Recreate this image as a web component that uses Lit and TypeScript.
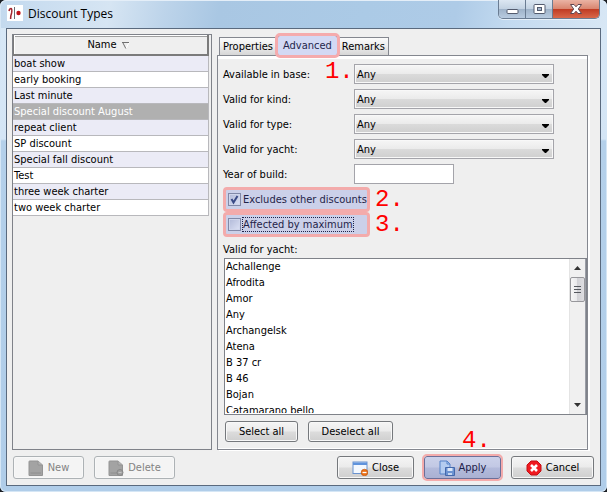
import { LitElement, html, css, svg } from "lit";
import { customElement, state } from "lit/decorators.js";
import { classMap } from "lit/directives/class-map.js";

const TYPES = [
  "boat show",
  "early booking",
  "Last minute",
  "Special discount August",
  "repeat client",
  "SP discount",
  "Special fall discount",
  "Test",
  "three week charter",
  "two week charter",
];

const FILTERS = [
  { id: "base", label: "Available in base:" },
  { id: "kind", label: "Valid for kind:" },
  { id: "type", label: "Valid for type:" },
  { id: "yacht", label: "Valid for yacht:" },
];

const YACHTS = [
  "Achallenge",
  "Afrodita",
  "Amor",
  "Any",
  "Archangelsk",
  "Atena",
  "B 37 cr",
  "B 46",
  "Bojan",
  "Catamarano bello",
];

const page = svg`
  <path d="M1 1.5Q1 1 1.500 1H10L14.500 5V15.500H1Z" fill="#a3a3a3" stroke="#949494"/>
  <path d="M10 1V5H14.500" fill="#b4b4b4" stroke="#949494"/>
  <path d="M2.500 13H13" stroke="#8e8e8e"/>`;

@customElement("app-root")
export class AppRoot extends LitElement {
  @state() private selected = 3;

  static styles = css`
    :host {
      display: block;
      background: #1c1f24;
      font: 11px/16px "DejaVu Sans Condensed", "DejaVu Sans", sans-serif;
      color: #000;
    }
    * {
      box-sizing: border-box;
    }
    button,
    input,
    select {
      font: inherit;
      color: inherit;
      margin: 0;
    }
    svg {
      display: block;
      flex: none;
    }
    .window {
      display: flex;
      flex-direction: column;
      min-height: 100vh;
      padding: 0 6px 6px;
      border-radius: 6px;
      background: linear-gradient(180deg, #d8e8f6 0, #d4e5f5 139px, #b4d0ea 141px, #b0cde9 100%);
      box-shadow: inset 0 0 0 1px #d5e6f5;
    }
    .titlebar {
      display: flex;
      align-items: flex-start;
      height: 28px;
      margin: 0 -5px;
      padding: 0 6px;
      border-top: 1px solid #e4eef8;
      border-radius: 6px 6px 0 0;
      background: linear-gradient(100deg, #c3d9ee 0, #d6e5f3 18%, #bdd4ea 27%, #a9c7e3 36%, #abcae6 60%, #aecbe7 75%, #c3daf0 84%, #d8e7f5 100%);
    }
    .logo {
      margin-top: 4px;
    }
    .title {
      flex: 1;
      margin: 4px 0 0 5px;
      font: 12px/18px "Open Sans", "Noto Sans", sans-serif;
    }
    .caption {
      display: flex;
      height: 19px;
      margin-top: -1px;
      border: 1px solid #6a7c92;
      border-top: 0;
      border-radius: 0 0 5px 5px;
      overflow: hidden;
      box-shadow: 0 1px 0 #e8f1fa;
    }
    .caption button {
      display: grid;
      place-items: center;
      width: 27px;
      padding: 0;
      border: 0;
      border-right: 1px solid #6a7c92;
      background: linear-gradient(#dce7f2 0, #c3d2e2 48%, #9eb2c8 50%, #b8cbe0 100%);
    }
    .caption .shut {
      width: 46px;
      border-right: 0;
      background: linear-gradient(#eab3a4 0, #d98670 48%, #bf3a22 50%, #d9684a 100%);
    }
    .content {
      flex: 1;
      display: flex;
      flex-direction: column;
      border: 1px solid #5a6a7e;
      background: #efefef;
    }
    .main {
      flex: 1;
      display: grid;
      grid-template-columns: 200px minmax(0, 1fr);
      gap: 5px;
      padding: 5px 12px 0 5px;
    }
    .pane {
      padding-right: 2px;
      border: 1px solid #7f8289;
    }
    .types {
      width: 100%;
      border-collapse: separate;
      border-spacing: 0;
      table-layout: fixed;
    }
    .types th {
      height: 21px;
      padding: 0;
      border: 1px solid #7b7b7b;
      border-width: 0 2px 2px 1px;
      box-shadow: inset 1px 1px 0 #fff, inset 0 2px 0 #a0a0a0;
      font-weight: normal;
    }
    .sort {
      display: flex;
      justify-content: center;
      align-items: center;
      gap: 5px;
      width: 100%;
      padding: 1px 4px 0 0;
      border: 0;
      background: none;
    }
    .types td {
      height: 16px;
      padding: 0 1px;
      border-right: 1px solid #b8b8bc;
      border-bottom: 1px solid #b8b8bc;
      line-height: 15px;
      background: #fff;
      white-space: nowrap;
    }
    .types tr:nth-child(odd) td {
      background: #ebebf6;
    }
    .types .on td {
      background: #b0b0b0;
      color: #fff;
    }
    .side {
      display: flex;
      flex-direction: column;
      min-width: 0;
    }
    .tabs {
      display: flex;
      align-items: flex-end;
      height: 21px;
      padding-left: 2px;
    }
    .tab {
      height: 18px;
      padding: 0 3px;
      border: 1px solid #84878f;
      border-bottom: 0;
      background: linear-gradient(#fbfbfb, #ececec 50%, #d6d6d6);
      line-height: 18px;
      white-space: nowrap;
    }
    .tabslot {
      position: relative;
      z-index: 1;
      margin-bottom: -1px;
    }
    .tabslot .tab {
      height: 21px;
      padding: 0 5px;
      border: 1px solid #84749c;
      border-bottom: 0;
      outline: 3px solid #f5abad;
      outline-offset: -1px;
      border-radius: 3px;
      background: #d3d9f4;
      color: #24264c;
    }
    .mark {
      font: 24px/24px "Liberation Mono", "Courier New", monospace;
      color: #f00;
      white-space: nowrap;
    }
    .first {
      position: absolute;
      left: 48px;
      top: 25px;
    }
    .panel {
      flex: 1;
      display: flex;
      flex-direction: column;
      padding: 8px 0 7px 5px;
      border: 1px solid #84878f;
      box-shadow: inset 0 3px 0 #fff, inset 0 -1px 0 #fff, 2px 1px 0 #fff;
    }
    .fields {
      display: grid;
      grid-template-columns: 131px 200px;
      grid-auto-rows: 20px;
      row-gap: 5px;
      line-height: 22px;
    }
    .combo {
      display: grid;
      align-items: center;
    }
    .combo select,
    .combo svg {
      grid-area: 1 / 1;
    }
    .combo svg {
      justify-self: end;
      margin: 4px 5px 0 0;
      pointer-events: none;
    }
    .combo select {
      appearance: none;
      width: 100%;
      height: 20px;
      padding: 2px 2px 0;
      border: 1px solid #a4a4aa;
      border-radius: 0;
      box-shadow: inset 0 0 0 1px #f8f8f8;
      background: linear-gradient(#f6f6f6 0, #ebebeb 48%, #dadada 52%, #cfcfcf 100%);
      line-height: 16px;
    }
    .year {
      width: 100px;
      height: 20px;
      padding: 0 3px;
      border: 1px solid #a4a4aa;
      background: #fff;
    }
    .checks {
      margin-top: 3px;
    }
    .line {
      display: flex;
      align-items: center;
      height: 25px;
      gap: 5px;
    }
    .check {
      display: flex;
      align-items: center;
      gap: 1px;
      width: 147px;
      height: 25px;
      padding: 0 2px;
      border: 3px solid #f3abab;
      border-radius: 4px;
      background: #cbd0e9;
      color: #1f2348;
      white-space: nowrap;
    }
    .box {
      display: grid;
      flex: none;
    }
    .box input,
    .box svg {
      grid-area: 1 / 1;
    }
    .box input {
      appearance: none;
      width: 13px;
      height: 13px;
      border: 1px solid #8189a8;
      background: linear-gradient(135deg, #b1b9d8, #dde2f5);
      box-shadow: inset 0 0 0 1px #d0d6ec;
    }
    .box svg {
      visibility: hidden;
      pointer-events: none;
    }
    .box input:checked + svg {
      visibility: visible;
    }
    .text {
      padding: 0 1px;
      line-height: 15px;
    }
    .focus {
      outline: 1px dotted #1f2348;
      outline-offset: -1px;
    }
    .caplabel {
      margin-top: 5px;
      line-height: 16px;
    }
    .listbox {
      flex: 1;
      display: flex;
      height: 156px;
      margin-left: 1px;
      border: 1px solid #7f8289;
      background: #fff;
    }
    .listbox select {
      flex: 1;
      min-width: 0;
      height: 154px;
      padding: 0;
      border: 0;
      background: #fff;
      outline: 0;
      overflow-y: auto;
      scrollbar-width: none;
    }
    .listbox option {
      height: 16px;
      min-height: 16px;
      padding: 1px 1px 0;
    }
    .scroll {
      display: flex;
      flex-direction: column;
      width: 17px;
      border-left: 1px solid #e4e4e4;
      border-right: 1px solid #9a9da6;
      background: #f0f0f0;
    }
    .scroll button {
      display: grid;
      place-items: center;
      height: 18px;
      padding: 0;
      border: 0;
      background: none;
    }
    .track {
      flex: 1;
    }
    .thumb {
      display: grid;
      place-items: center;
      height: 25px;
      border: 1px solid #97979b;
      border-radius: 2px;
      background: linear-gradient(90deg, #f6f6f6 0, #e9e9eb 45%, #d2d2d6 50%, #dedee2 100%);
    }
    .picks {
      display: flex;
      gap: 10px;
      margin: 6px 0 0 2px;
    }
    .btn {
      display: flex;
      align-items: center;
      justify-content: center;
      gap: 4px;
      height: 23px;
      padding: 0;
      border: 1px solid #75787c;
      border-radius: 3px;
      box-shadow: inset 0 0 0 1px #f8f8f8;
      background: linear-gradient(#f5f5f5 0, #ebebeb 48%, #dcdcdc 52%, #cfcfcf 100%);
      white-space: nowrap;
    }
    .btn:disabled {
      border-color: #adb2b5;
      background: #f4f4f4;
      color: #838383;
    }
    .picks .btn {
      height: 21px;
    }
    .w71 {
      width: 71px;
    }
    .w73 {
      width: 73px;
    }
    .w77 {
      width: 77px;
    }
    .w81 {
      width: 81px;
    }
    .w83 {
      width: 83px;
    }
    .w85 {
      width: 85px;
    }
    .footer {
      display: flex;
      gap: 10px;
      padding: 6px;
    }
    .spacer {
      flex: 1;
    }
    .applyslot {
      position: relative;
    }
    .fourth {
      position: absolute;
      left: 38px;
      top: -27px;
    }
    .apply {
      border-color: #6c6f98;
      outline: 2px solid #f3abab;
      box-shadow: none;
      background: linear-gradient(#cbd1ea 0, #c2c8e4 48%, #b3badb 52%, #aab1d3 100%);
      color: #1c2048;
    }
  `;

  private button(label: string, size: string, icon: unknown, disabled = false) {
    return html`<button class="btn ${size}" ?disabled=${disabled}>
      <svg width="16" height="16" viewBox="0 0 16 16" fill="none" aria-hidden="true">${icon}</svg>${label}
    </button>`;
  }

  render() {
    return html`
      <div class="window">
        <header class="titlebar">
          <svg class="logo" width="16" height="16" viewBox="0 0 16 16" aria-hidden="true">
            <rect width="16" height="16" fill="#fff" />
            <path d="M2 6Q2.500 3.500 4 3.500Q5.300 4 4.600 8Q3.500 11 3.600 14" fill="none" stroke="#a3242c" stroke-width="1.500" />
            <path d="M7.500 2V14" stroke="#6a6a72" stroke-width="1" />
            <circle cx="11.500" cy="8" r="2.200" fill="#bf1219" />
          </svg>
          <span class="title">Discount Types</span>
          <div class="caption">
            <button aria-label="Minimize">
              <svg width="13" height="16" viewBox="0 0 13 16"><rect x="1" y="8.500" width="11" height="4" rx="1" fill="#fff" stroke="#535b6e" /></svg>
            </button>
            <button aria-label="Maximize">
              <svg width="13" height="16" viewBox="0 0 13 16">
                <rect x="1" y="3.500" width="11" height="9" rx="1" fill="#fff" stroke="#535b6e" />
                <rect x="4.500" y="6.500" width="4" height="3" fill="#a5b6cc" stroke="#535b6e" />
              </svg>
            </button>
            <button class="shut" aria-label="Close window">
              <svg width="14" height="16" viewBox="0 0 14 16">
                <path d="M1.500 3.500H5L7 5.800L9 3.500H12.500L9.300 8L12.500 12.500H9L7 10.200L5 12.500H1.500L4.700 8Z" fill="#fff" stroke="#5f4650" />
              </svg>
            </button>
          </div>
        </header>
        <div class="content">
          <div class="main">
            <div class="pane">
              <table class="types">
                <thead>
                  <tr>
                    <th>
                      <button class="sort">
                        Name
                        <svg width="8" height="8" viewBox="0 0 8 8" fill="none">
                          <path d="M7 1.500L4 7.500" stroke="#fff" />
                          <path d="M0 1.500H7M1 2L3.800 7.500" stroke="#707070" />
                        </svg>
                      </button>
                    </th>
                  </tr>
                </thead>
                <tbody>
                  ${TYPES.map(
                    (name, i) => html`<tr class=${classMap({ on: i === this.selected })} @click=${() => (this.selected = i)}>
                      <td>${name}</td>
                    </tr>`,
                  )}
                </tbody>
              </table>
            </div>
            <div class="side">
              <div class="tabs" role="tablist">
                <button class="tab" role="tab">Properties</button>
                <div class="tabslot">
                  <button class="tab" role="tab" aria-selected="true">Advanced</button>
                  <span class="mark first">1.</span>
                </div>
                <button class="tab" role="tab">Remarks</button>
              </div>
              <div class="panel">
                <div class="fields">
                  ${FILTERS.map(
                    (f) => html`<label for=${f.id}>${f.label}</label>
                      <div class="combo">
                        <select id=${f.id}><option>Any</option></select>
                        <svg width="7" height="4" viewBox="0 0 7 4"><path d="M0 0H7V1L4 4H3L0 1Z" /></svg>
                      </div>`,
                  )}
                  <label for="year">Year of build:</label>
                  <input class="year" id="year" type="text" />
                </div>
                <div class="checks">
                  <div class="line">
                    <label class="check">
                      <span class="box">
                        <input type="checkbox" checked />
                        <svg width="13" height="13" viewBox="0 0 13 13" fill="none"><path d="M3.500 6L5.500 9.500L9.500 3" stroke="#3a4a86" stroke-width="2" /></svg>
                      </span>
                      <span class="text">Excludes other discounts</span>
                    </label>
                    <span class="mark">2.</span>
                  </div>
                  <div class="line">
                    <label class="check">
                      <span class="box">
                        <input type="checkbox" />
                      </span>
                      <span class="text focus">Affected by maximum</span>
                    </label>
                    <span class="mark">3.</span>
                  </div>
                </div>
                <label class="caplabel" for="yachts">Valid for yacht:</label>
                <div class="listbox">
                  <select id="yachts" multiple size="9">
                    ${YACHTS.map((y) => html`<option>${y}</option>`)}
                  </select>
                  <div class="scroll">
                    <button aria-label="Scroll up"><svg width="7" height="4" viewBox="0 0 7 4"><path d="M0 4L3.500 0L7 4Z" fill="#333" /></svg></button>
                    <div class="track">
                      <div class="thumb">
                        <svg width="7" height="8" viewBox="0 0 7 8"><path d="M0 .5H7M0 3.500H7M0 6.500H7" stroke="#55585e" /></svg>
                      </div>
                    </div>
                    <button aria-label="Scroll down"><svg width="7" height="4" viewBox="0 0 7 4"><path d="M0 0L3.500 4L7 0Z" fill="#333" /></svg></button>
                  </div>
                </div>
                <div class="picks">
                  <button class="btn w73">Select all</button>
                  <button class="btn w85">Deselect all</button>
                </div>
              </div>
            </div>
          </div>
          <footer class="footer">
            ${this.button("New", "w71", page, true)}
            ${this.button(
              "Delete",
              "w81",
              svg`${page}<circle cx="12" cy="12.500" r="3" fill="#a0a0a0" stroke="#878787"/><path d="M10.500 12.500H13.500" stroke="#c4c4c4"/>`,
              true,
            )}
            <div class="spacer"></div>
            ${this.button(
              "Close",
              "w77",
              svg`<rect x="1" y="2" width="14" height="11.500" fill="#f3f8fe" stroke="#6b93cf"/>
                <path d="M1 2.500H15V5H1Z" fill="#5f93dc"/>
                <circle cx="12.500" cy="12.500" r="3.300" fill="#ec7014" stroke="#b9500c" stroke-width=".6"/>
                <path d="M10.500 12.500H14.500" stroke="#fff" stroke-width="1.300"/>`,
            )}
            <div class="applyslot">
              <span class="mark fourth">4.</span>
              ${this.button(
                "Apply",
                "w77 apply",
                svg`<path d="M1 1H8L11 4V14H1Z" fill="#b4ccf0" stroke="#5582c8"/>
                  <path d="M8 1V4H11" stroke="#5582c8"/>
                  <path d="M6.500 7.500H15.500V15.500H6.500Z" fill="#6c93d2" stroke="#4468ac"/>
                  <path d="M8.500 8H13.500V11H8.500Z" fill="#dce7f8"/>
                  <path d="M9 13H13V15H9Z" fill="#c5d6f0"/>`,
              )}
            </div>
            ${this.button(
              "Cancel",
              "w83",
              svg`<path d="M5 1H11L15 5V11L11 15H5L1 11V5Z" fill="#f01a20" stroke="#c40f14"/>
                <path d="M5 5L11 11M11 5L5 11" stroke="#fff" stroke-width="2.600"/>`,
            )}
          </footer>
        </div>
      </div>
    `;
  }
}
